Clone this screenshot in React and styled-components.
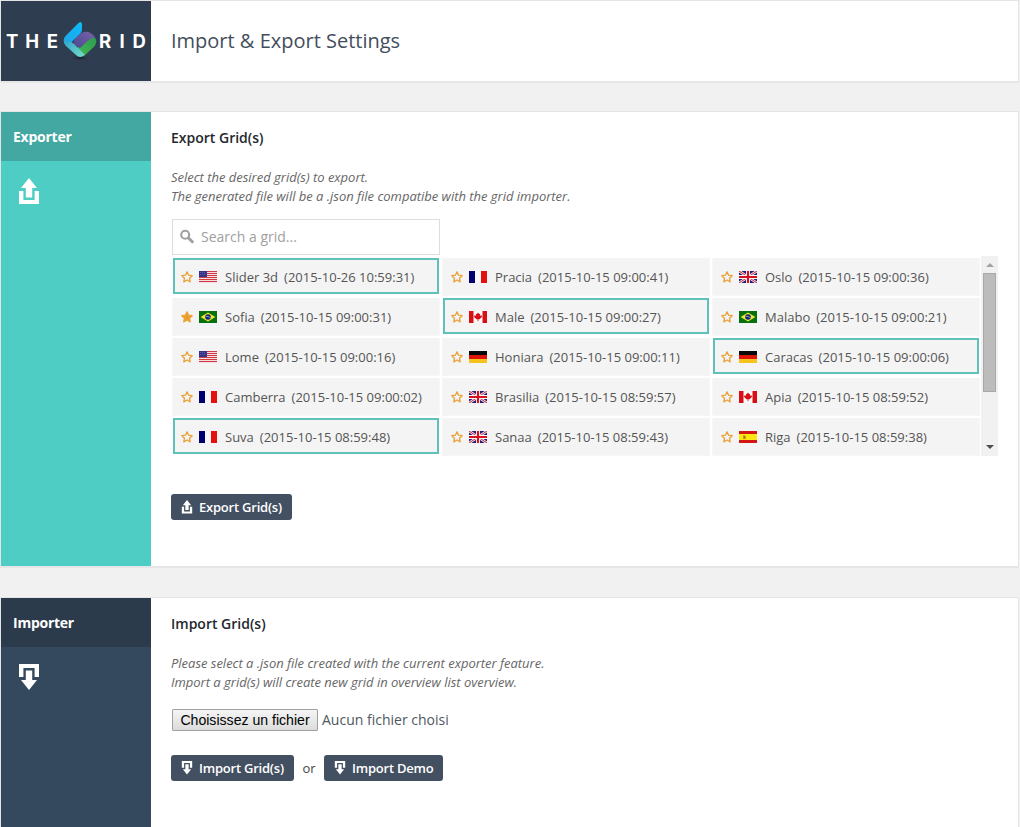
import React from "react";
import styled, { createGlobalStyle, css } from "styled-components";

const GlobalStyle = createGlobalStyle`
  * { box-sizing: border-box; }
  body {
    margin: 0;
    background: #f1f1f1;
    color: #50575e;
    font-family: "Open Sans", "Noto Sans", sans-serif;
    font-size: 13px;
  }
  h1, h2, h3, p { margin: 0; }
  svg { display: block; flex: none; }
`;

const Page = styled.div`
  width: 1019px;
  height: 100vh;
  overflow: hidden;
  display: flex;
  flex-direction: column;
`;

const Panel = styled.section`
  display: flex;
  flex: none;
  height: ${(p) => p.$height};
  margin-bottom: ${(p) => p.$gap || 0}px;
  background: #fff;
  border: 1px solid #e5e5e5;
  box-shadow: 0 1px 1px rgba(0, 0, 0, 0.04);
  ${(p) =>
    p.$fill &&
    css`
      flex: 1;
      border-bottom: 0;
    `}
`;

const LogoBox = styled.div`
  width: 150px;
  display: flex;
  align-items: center;
  background: #2f3d50;
  color: #fff;
  padding-left: 1px;
`;

const LogoWord = styled.div`
  display: flex;
  font: 700 18.5px/24px Inter, sans-serif;
  span {
    display: flex;
    justify-content: center;
    width: ${(p) => p.$cell}px;
  }
`;

const Title = styled.h1`
  align-self: center;
  padding-left: 20px;
  font-size: 20px;
  font-weight: 400;
  line-height: 28px;
  color: #434e5c;
`;

const Side = styled.aside`
  width: 150px;
  flex: none;
  background: ${(p) => p.$bg};
  color: #fff;
  svg { margin: 17px 0 0 17px; }
`;

const SideTitle = styled.h2`
  height: 49px;
  padding-left: 12px;
  background: ${(p) => p.$bg};
  font-size: 14px;
  font-weight: 700;
  line-height: 50px;
  letter-spacing: -0.25px;
`;

const Content = styled.div`
  flex: 1;
  display: flex;
  flex-direction: column;
  align-items: flex-start;
  padding: 14px 20px 0;
`;

const Heading = styled.h3`
  font-size: 14px;
  font-weight: 600;
  line-height: 24px;
  color: #23282d;
`;

const Description = styled.p`
  margin-top: 18px;
  font-size: 13px;
  font-style: italic;
  line-height: 19px;
  letter-spacing: -0.015px;
  color: #666;
`;

const Search = styled.div`
  display: flex;
  align-items: center;
  gap: 6px;
  width: 268px;
  height: 36px;
  margin: 13px 0 1px 1px;
  padding: 0 0 2px 7px;
  border: 1px solid #ddd;
  color: #a0a0a0;
  font-size: 14px;
`;

const ListFrame = styled.div`
  display: flex;
  width: 827px;
  height: 200px;
`;

const List = styled.div`
  flex: 1;
  display: grid;
  grid-template-columns: repeat(3, 266px);
  grid-auto-rows: 36px;
  gap: 4px;
  padding: 2px 0 0 2px;
`;

const Item = styled.div`
  display: flex;
  align-items: center;
  padding: 2px 0 0 8px;
  background: #f4f4f4;
  color: #555;
  white-space: pre;
  box-shadow: 0 1px 0 #f4f4f4, 0 1px 0 1px #f7f7f7;
  ${(p) =>
    p.$selected &&
    css`
      padding-left: 6px;
      border: 2px solid #5fc1b9;
      box-shadow: none;
    `}
`;

const Flag = styled.svg`
  margin: 0 8px 0 6px;
`;

const ItemDate = styled.span`
  margin-left: 6px;
`;

const Scrollbar = styled.div`
  width: 17px;
  display: flex;
  flex-direction: column;
  align-items: center;
  background: #f1f1f1;
`;

const ScrollThumb = styled.div`
  width: 13px;
  height: 119px;
  background: #bcbcbc;
  border: 1px solid #a8a8a8;
`;

const ScrollArrow = styled.svg`
  margin: ${(p) => p.$margin};
`;

const Button = styled.button`
  display: flex;
  align-items: center;
  gap: 6px;
  width: ${(p) => p.$width}px;
  height: 26px;
  padding: 0 0 0 10px;
  border: 0;
  border-radius: 3px;
  background: #435061;
  color: #fff;
  font: 600 13px/26px "Open Sans", sans-serif;
  letter-spacing: -0.22px;
  white-space: nowrap;
`;

const ExportAction = styled.div`
  margin-top: 38px;
`;

const FileRow = styled.div`
  display: flex;
  align-items: flex-start;
  gap: 4px;
  margin: 17px 0 24px 1px;
  height: 22px;
  font-size: 14px;
  line-height: 21px;
`;

const FileButton = styled.button`
  width: 146px;
  height: 22px;
  padding: 0;
  border: 1px solid #a0a0a0;
  border-radius: 1px;
  background: linear-gradient(#f5f5f5, #dcdcdc);
  color: #000;
  font: 14.1px/20px "Liberation Sans", Arial, sans-serif;
  white-space: nowrap;
`;

const ImportActions = styled.div`
  display: flex;
  align-items: center;
`;

const Or = styled.span`
  width: 30px;
  text-align: center;
  color: #444;
`;

const LogoMark = () => (
  <svg width="34" height="42" viewBox="0 0 34 42">
    <defs>
      <linearGradient id="lm-blue" x1="1" y1="0" x2="0" y2="1">
        <stop offset="0" stopColor="#0cbcf4" />
        <stop offset="1" stopColor="#1fa3ea" />
      </linearGradient>
      <linearGradient id="lm-teal" x1="0" y1="0" x2="1" y2="1">
        <stop offset="0" stopColor="#2aa3cc" />
        <stop offset="1" stopColor="#78dcc8" />
      </linearGradient>
      <linearGradient id="lm-violet" x1="0" y1="1" x2="1" y2="0">
        <stop offset="0" stopColor="#4b4a90" />
        <stop offset="1" stopColor="#7862aa" />
      </linearGradient>
      <linearGradient id="lm-green" x1="1" y1="0" x2="0" y2="1">
        <stop offset="0" stopColor="#2f9a4c" />
        <stop offset="1" stopColor="#43bb58" />
      </linearGradient>
      <radialGradient id="lm-shadow">
        <stop offset="0" stopColor="#151d29" />
        <stop offset="1" stopColor="#2f3d50" stopOpacity="0" />
      </radialGradient>
    </defs>
    <ellipse cx="17" cy="38" rx="12" ry="2.6" fill="url(#lm-shadow)" />
    <path d="M32 17.5 Q35 22.5 31 26.8 L21.5 35.5 Q17.5 38 14 34 L13 29 L26 18Z" fill="url(#lm-green)" />
    <path d="M10.5 24.5 Q10 19.5 14 16.5 L18 13.2 Q26 9 32.3 17.5 Q28.500 17.500 25.500 20.2 L17 28Z" fill="url(#lm-violet)" />
    <path d="M2.500 25.500 Q-1.500 20 3 15.500 L15.500 3 Q18.800 0.200 19 4.500 V9.500 Q19 12 17 13.800 L10 20.5 Q7.500 23.500 9 27Z" fill="url(#lm-blue)" />
    <path d="M1.500 18.500 Q3.500 21.800 8 22.300 Q9.800 22.800 11.500 24.500 L21.800 34.800 Q17.200 39 13 35 L3.500 26.500 Q0 22.500 1.500 18.500Z" fill="url(#lm-teal)" />
  </svg>
);

const ExportIcon = ({ width = 22, height = 27 }) => (
  <svg width={width} height={height} viewBox="0 0 22 27" fill="currentColor">
    <path d="M11 0 L19 10 H14.2 V19.5 H7.8 V10 H3Z" />
    <path d="M1 13 H5.4 V22 H16.6 V13 H21 V26 H1Z" />
  </svg>
);

const ImportIcon = ({ width = 22, height = 27 }) => (
  <svg width={width} height={height} viewBox="0 0 22 27" fill="currentColor">
    <path d="M1 0 H21 V13 H16.6 V4 H5.4 V13 H1Z" />
    <path d="M7.8 6.5 H14.2 V16 H19 L11 26 L3 16 H7.8Z" />
  </svg>
);

const SearchIcon = () => (
  <svg width="15" height="15" viewBox="0 0 15 15" fill="none" stroke="#a0a0a0">
    <circle cx="5.2" cy="5.7" r="4" strokeWidth="2.1" />
    <path d="M8.5 9 L12.3 12.8" strokeWidth="3" strokeLinecap="round" />
  </svg>
);

const Star = ({ filled }) => (
  <svg width="12" height="12" viewBox="0 0 12 12">
    <path
      d="M6 0.9 L7.55 4.2 L11.2 4.65 L8.5 7.15 L9.2 10.8 L6 9 L2.8 10.8 L3.5 7.15 L0.8 4.65 L4.45 4.2Z"
      fill={filled ? "#eb9d27" : "none"}
      stroke="#eba23a"
      strokeWidth="1.35"
      strokeLinejoin="round"
    />
  </svg>
);

const flagArt = {
  us: (
    <>
      <path fill="#f3dede" d="M0 0h18v12H0z" />
      <path stroke="#cf3a44" strokeWidth="1" d="M0 .5h18M0 2.5h18M0 4.5h18M0 6.5h18M0 8.5h18M0 10.5h18" />
      <path fill="#34348c" d="M0 0h8v6H0z" />
      <path stroke="#6565a8" strokeWidth=".8" strokeDasharray="1 1" d="M1 1.5h6M1 3.5h6" />
    </>
  ),
  fr: (
    <>
      <path fill="#f7f7f7" d="M0 0h18v12H0z" />
      <path fill="#00006e" d="M0 0h6v12H0z" />
      <path fill="#e41010" d="M12 0h6v12h-6z" />
    </>
  ),
  gb: (
    <>
      <path fill="#1f1f78" d="M0 0h18v12H0z" />
      <path stroke="#f1e6ee" strokeWidth="2.6" d="M0 0l18 12M18 0L0 12" />
      <path stroke="#d22a3c" strokeWidth="1" d="M0 0l18 12M18 0L0 12" />
      <path stroke="#fff" strokeWidth="4" d="M9 0v12M0 6h18" />
      <path stroke="#d6101e" strokeWidth="2.2" d="M9 0v12M0 6h18" />
    </>
  ),
  br: (
    <>
      <path fill="#05700d" d="M0 0h18v12H0z" />
      <path fill="#eae82c" d="M9 1.4L16.4 6 9 10.6 1.6 6z" />
      <circle cx="9" cy="6" r="2.8" fill="#14207c" />
      <path stroke="#9fb2dc" strokeWidth=".8" fill="none" d="M6.6 5.3Q9 5 11.4 6.8" />
    </>
  ),
  ca: (
    <>
      <path fill="#fafafa" d="M0 0h18v12H0z" />
      <path fill="#d80f14" d="M0 0h4.5v12H0zM13.5 0H18v12h-4.5z" />
      <path fill="#d80f14" d="M9 1.5l1.1 1.6 1-.3-.2 2 1.7-.6.3 1.9-2.3 2.2H9.4v2h-.8v-2H7.4L5.1 6.1l.3-1.9 1.7.6-.2-2 1 .3z" />
    </>
  ),
  de: (
    <>
      <path fill="#080808" d="M0 0h18v4H0z" />
      <path fill="#dc1508" d="M0 4h18v4H0z" />
      <path fill="#f5c31c" d="M0 8h18v4H0z" />
    </>
  ),
  es: (
    <>
      <path fill="#d31414" d="M0 0h18v12H0z" />
      <path fill="#fbe614" d="M0 3h18v6H0z" />
      <path fill="#b5701c" d="M4.2 4.5h2l.8 3.2H4.2z" />
    </>
  ),
};

const grids = [
  ["Slider 3d", "us", "2015-10-26 10:59:31", { selected: true }],
  ["Pracia", "fr", "2015-10-15 09:00:41"],
  ["Oslo", "gb", "2015-10-15 09:00:36"],
  ["Sofia", "br", "2015-10-15 09:00:31", { starred: true }],
  ["Male", "ca", "2015-10-15 09:00:27", { selected: true }],
  ["Malabo", "br", "2015-10-15 09:00:21"],
  ["Lome", "us", "2015-10-15 09:00:16"],
  ["Honiara", "de", "2015-10-15 09:00:11"],
  ["Caracas", "de", "2015-10-15 09:00:06", { selected: true }],
  ["Camberra", "fr", "2015-10-15 09:00:02"],
  ["Brasilia", "gb", "2015-10-15 08:59:57"],
  ["Apia", "ca", "2015-10-15 08:59:52"],
  ["Suva", "fr", "2015-10-15 08:59:48", { selected: true }],
  ["Sanaa", "gb", "2015-10-15 08:59:43"],
  ["Riga", "es", "2015-10-15 08:59:38"],
];

const GridItem = ({ name, flag, date, selected, starred }) => (
  <Item $selected={selected}>
    <Star filled={starred} />
    <Flag width="18" height="12" viewBox="0 0 18 12">
      {flagArt[flag]}
    </Flag>
    <span>{name}</span>
    <ItemDate>({date})</ItemDate>
  </Item>
);

export default function App() {
  return (
    <Page>
      <GlobalStyle />
      <Panel as="header" $height="82px" $gap={29}>
        <LogoBox>
          <LogoWord $cell={20.2}>
            <span>T</span>
            <span>H</span>
            <span>E</span>
          </LogoWord>
          <LogoMark />
          <LogoWord $cell={17}>
            <span>R</span>
            <span>I</span>
            <span>D</span>
          </LogoWord>
        </LogoBox>
        <Title>Import &amp; Export Settings</Title>
      </Panel>

      <Panel $height="456px" $gap={30}>
        <Side $bg="#4ecdc4">
          <SideTitle $bg="#43a8a1">Exporter</SideTitle>
          <ExportIcon />
        </Side>
        <Content>
          <Heading>Export Grid(s)</Heading>
          <Description>
            Select the desired grid(s) to export.
            <br />
            The generated file will be a .json file compatibe with the grid importer.
          </Description>
          <Search>
            <SearchIcon />
            <span>Search a grid...</span>
          </Search>
          <ListFrame>
            <List>
              {grids.map(([name, flag, date, state]) => (
                <GridItem key={name} name={name} flag={flag} date={date} {...state} />
              ))}
            </List>
            <Scrollbar>
              <ScrollArrow $margin="7px 0 6px" width="8" height="4" viewBox="0 0 8 4">
                <path d="M4 0L8 4H0z" fill="#a3a3a3" />
              </ScrollArrow>
              <ScrollThumb />
              <ScrollArrow $margin="53px 0 0" width="8" height="4" viewBox="0 0 8 4">
                <path d="M0 0H8L4 4z" fill="#4d4d4d" />
              </ScrollArrow>
            </Scrollbar>
          </ListFrame>
          <ExportAction>
            <Button $width={121}>
              <ExportIcon width={12} height={14} />
              Export Grid(s)
            </Button>
          </ExportAction>
        </Content>
      </Panel>

      <Panel $fill>
        <Side $bg="#34495e">
          <SideTitle $bg="#2c3b4b">Importer</SideTitle>
          <ImportIcon />
        </Side>
        <Content>
          <Heading>Import Grid(s)</Heading>
          <Description>
            Please select a .json file created with the current exporter feature.
            <br />
            Import a grid(s) will create new grid in overview list overview.
          </Description>
          <FileRow>
            <FileButton>Choisissez un fichier</FileButton>
            <span>Aucun fichier choisi</span>
          </FileRow>
          <ImportActions>
            <Button $width={123}>
              <ImportIcon width={12} height={14} />
              Import Grid(s)
            </Button>
            <Or>or</Or>
            <Button $width={119}>
              <ImportIcon width={12} height={14} />
              Import Demo
            </Button>
          </ImportActions>
        </Content>
      </Panel>
    </Page>
  );
}
